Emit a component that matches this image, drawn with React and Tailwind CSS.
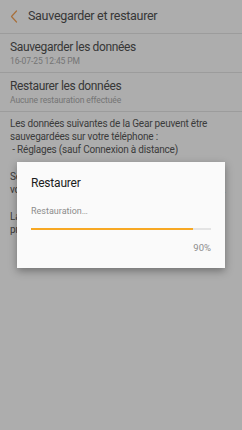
import React from 'react';

function BackArrow() {
  return (
    <svg width="8" height="13" viewBox="0 0 8 13" fill="none">
      <path d="M6.5 1 L1.5 6.5 L6.5 12" stroke="#f0a055" strokeWidth="1.2" strokeLinecap="round" strokeLinejoin="round" />
    </svg>
  );
}

function SettingRow({ title, subtitle }) {
  return (
    <div className="px-[10px] pt-[6px] pb-[5px] border-b border-[#e0e0e0]">
      <p className="text-[12px] leading-[15px] tracking-[-0.35px] text-[#505050]">{title}</p>
      <p className="text-[8.5px] leading-[12px] tracking-[-0.1px] text-[#a8a8a8]">{subtitle}</p>
    </div>
  );
}

export default function App() {
  const progress = 90;

  return (
    <div className="relative w-[242px] h-[430px] overflow-hidden bg-[#f8f8f8] font-['Roboto','Noto_Sans',sans-serif]">
      {/* en-tête */}
      <header className="h-[34px] flex items-center gap-[10px] pl-[10px] border-b border-[#e0e0e0]">
        <BackArrow />
        <h1 className="text-[12.5px] tracking-[-0.3px] text-[#505050]">Sauvegarder et restaurer</h1>
      </header>

      <SettingRow title="Sauvegarder les données" subtitle="16-07-25 12:45 PM" />
      <SettingRow title="Restaurer les données" subtitle="Aucune restauration effectuée" />

      <div className="px-[10px] pt-[5px] text-[10px] leading-[13px] tracking-[-0.2px] text-[#565656]">
        <p>
          Les données suivantes de la Gear peuvent être sauvegardées sur votre téléphone :
          <br />
          &nbsp;- Réglages (sauf Connexion à distance)
        </p>
        <p className="mt-[14px]">
          Sélectionnez les données à restaurer depuis
          <br />
          <span className="whitespace-nowrap">votre téléphone, afin de les remettre sur votre Gear.</span>
        </p>
        <p className="mt-[14px]">
          La sauvegarde la plus récente remplacera la précédente.
        </p>
      </div>

      {/* voile */}
      <div className="absolute inset-0 bg-black/30" />

      {/* boîte de dialogue */}
      <div className="absolute left-[17px] top-[162px] w-[208px] h-[106px] bg-[#fafafa] px-[14px] pt-[13px] shadow-[0_3px_8px_rgba(0,0,0,0.35)]">
        <p className="text-[12px] leading-[16px] tracking-[-0.2px] text-[#1c1c1c]">Restaurer</p>
        <p className="mt-[14px] text-[9px] leading-[12px] text-[#8c8c8c]">Restauration…</p>
        <div className="mt-[11px] h-[2px] bg-[#e4e4e4]">
          <div className="h-full bg-[#f7a823]" style={{ width: `${progress}%` }} />
        </div>
        <p className="mt-[12px] text-right text-[9.5px] leading-[12px] text-[#8c8c8c]">{progress}%</p>
      </div>
    </div>
  );
}
